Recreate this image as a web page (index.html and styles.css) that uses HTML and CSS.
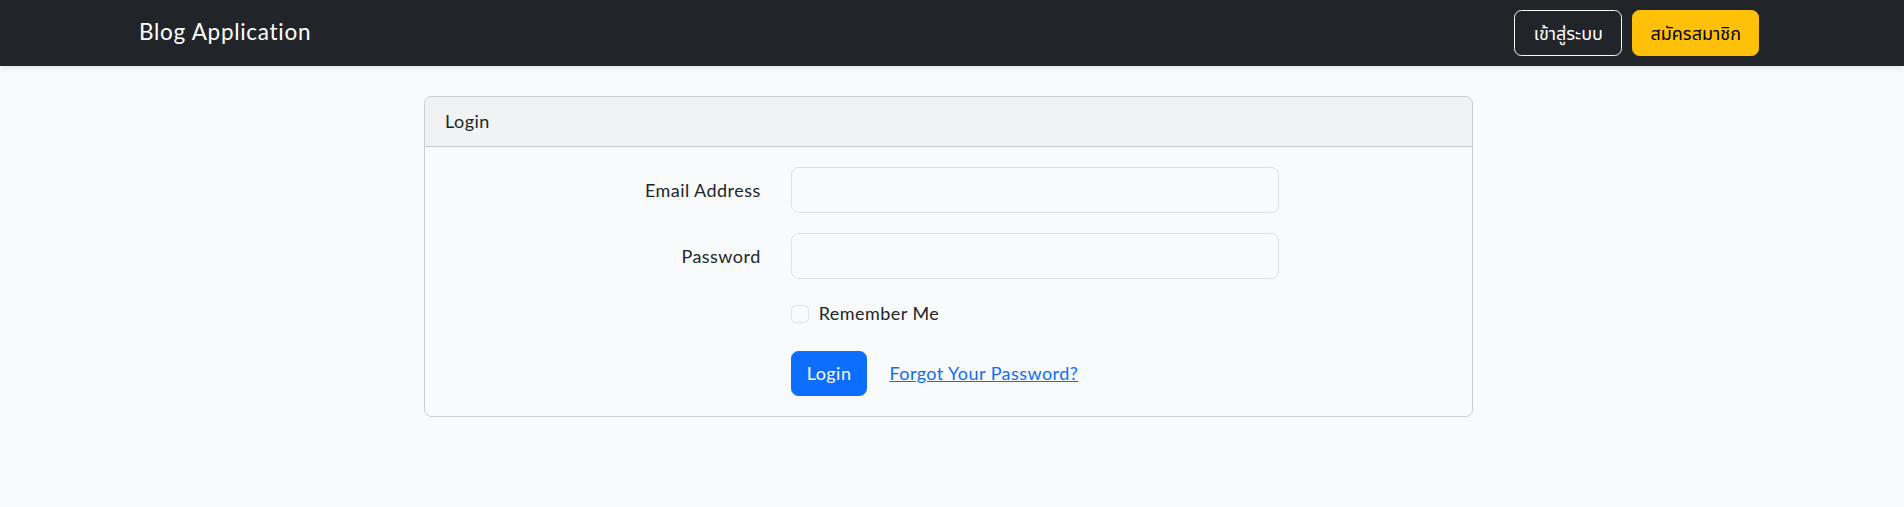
FILE: index.html
```html
<!DOCTYPE html>
<html lang="en">
<head>
<meta charset="utf-8">
<title>Blog Application</title>
<link rel="stylesheet" href="styles.css">
</head>
<body>
<nav class="navbar">
  <div class="nav-inner">
    <a class="brand" href="#">Blog Application</a>
    <div class="nav-actions">
      <a class="btn btn-thai btn-outline-light" href="#">เข้าสู่ระบบ</a>
      <a class="btn btn-thai btn-warning" href="#">สมัครสมาชิก</a>
    </div>
  </div>
</nav>
<main class="main">
  <div class="card">
    <div class="card-header">Login</div>
    <div class="card-body">
      <form>
        <div class="row">
          <label class="col-label" for="email">Email Address</label>
          <div class="col-input"><input id="email" class="form-control" type="email"></div>
        </div>
        <div class="row">
          <label class="col-label" for="password">Password</label>
          <div class="col-input"><input id="password" class="form-control" type="password"></div>
        </div>
        <div class="row">
          <div class="col-input col-offset">
            <div class="form-check">
              <span class="check-box"></span>
              <span class="check-label">Remember Me</span>
            </div>
          </div>
        </div>
        <div class="row row-last">
          <div class="col-input col-offset actions">
            <button type="button" class="btn btn-primary">Login</button>
            <a class="btn btn-link" href="#">Forgot Your Password?</a>
          </div>
        </div>
      </form>
    </div>
  </div>
</main>
</body>
</html>
```
FILE: styles.css
```css
* { box-sizing: border-box; }

body {
  margin: 0;
  background: #f8fafc;
  color: #212529;
  font-family: "Lato", "Noto Sans Thai", "Noto Sans", sans-serif;
  font-size: 18px;
  line-height: 1.6;
  letter-spacing: 0.025em;
}

.navbar {
  background: #212529;
  height: 66px;
  box-shadow: 0 2.5px 5px rgba(0, 0, 0, 0.075);
}

.nav-inner {
  height: 100%;
  display: flex;
  align-items: center;
  justify-content: space-between;
  padding: 0 145px 0 139px;
}

.brand {
  color: #fff;
  font-size: 22.5px;
  text-decoration: none;
  line-height: 1.6;
  letter-spacing: 0.032em;
  margin-bottom: 3px;
}

.nav-actions {
  display: flex;
  gap: 10px;
  align-items: center;
}

.btn {
  display: inline-block;
  font-family: inherit;
  font-size: 18px;
  line-height: 28.8px;
  letter-spacing: inherit;
  padding: 7.5px 15px;
  border: 1px solid transparent;
  border-radius: 7.5px;
  text-decoration: none;
  cursor: pointer;
}

.btn-thai {
  letter-spacing: 0;
}

.btn-outline-light {
  color: #fff;
  border-color: #f8f9fa;
  padding-left: 18.5px;
  padding-right: 18.5px;
}

.btn-warning {
  color: #000;
  background: #ffc107;
  border-color: #ffc107;
  padding-left: 17px;
  padding-right: 17px;
}

.main {
  padding-top: 30px;
}

.card {
  width: 1049px;
  margin-left: 424px;
  border: 1px solid rgba(0, 0, 0, 0.175);
  border-radius: 7.5px;
  overflow: hidden;
}

.card-header {
  padding: 10px 20px;
  background: rgba(0, 0, 0, 0.03);
  border-bottom: 1px solid rgba(0, 0, 0, 0.175);
}

.card-body {
  padding: 20px;
}

.row {
  display: flex;
  margin: 0 -15px 20px;
}

.row-last {
  margin-bottom: 0;
}

.col-label {
  width: 33.3333%;
  padding: 8.75px 15px;
  text-align: right;
}

.col-input {
  width: 50%;
  padding: 0 15px;
}

.col-offset {
  margin-left: 33.3333%;
}

.form-control {
  display: block;
  width: 100%;
  height: 46.3px;
  padding: 7.5px 15px;
  font-family: inherit;
  font-size: 18px;
  background: #f8fafc;
  border: 1px solid #dee2e6;
  border-radius: 7.5px;
  color: #212529;
}

.form-check {
  display: flex;
  align-items: center;
  gap: 10px;
  height: 28.8px;
  margin-bottom: 2.5px;
}

.check-box {
  width: 18px;
  height: 18px;
  border: 1px solid #dee2e6;
  border-radius: 4.5px;
  background: #f8fafc;
  flex: none;
}

.actions {
  display: flex;
  align-items: center;
  gap: 6px;
}

.btn-primary {
  color: #fff;
  background: #0d6efd;
  border-color: #0d6efd;
}

.btn-link {
  color: #0d6efd;
  text-decoration: underline;
}
```
